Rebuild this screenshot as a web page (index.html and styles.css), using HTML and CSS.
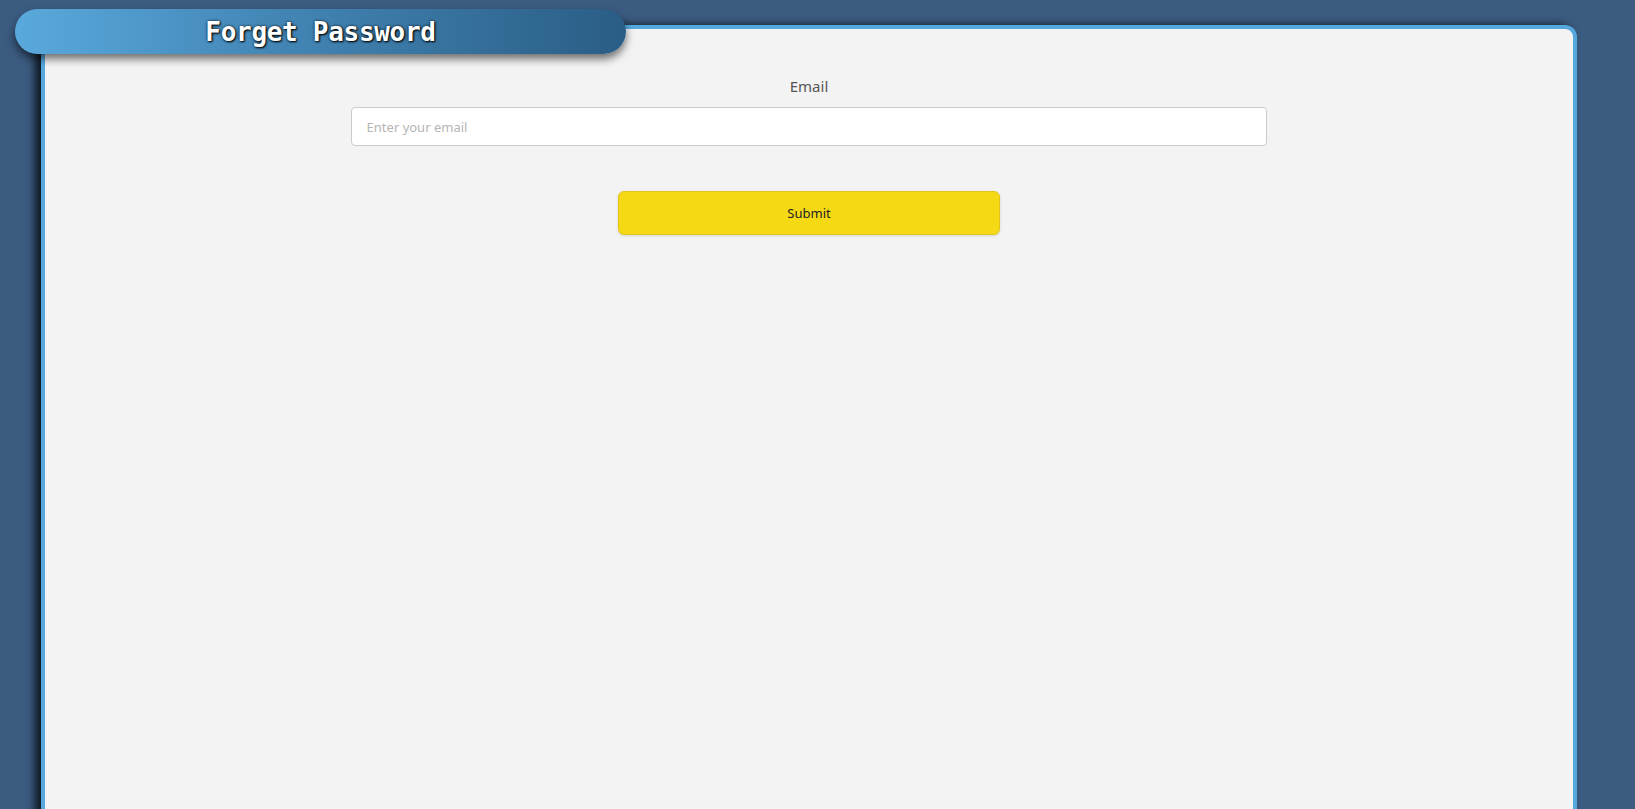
FILE: index.html
```html
<!DOCTYPE html>
<html lang="en">
<head>
<meta charset="utf-8">
<title>Forget Password</title>
<link rel="stylesheet" href="styles.css">
</head>
<body>
<div class="page">
  <div class="title-pill"><h1 class="title">Forget Password</h1></div>
  <main class="card">
    <form class="form">
      <label class="label" for="email">Email</label>
      <input class="input" id="email" type="email" placeholder="Enter your email">
      <button class="submit" type="button">Submit</button>
    </form>
  </main>
</div>
</body>
</html>
```

FILE: styles.css
```css
html, body {
  margin: 0;
  padding: 0;
  height: 100%;
  overflow: hidden;
}
body {
  background: #3b5b80;
  font-family: "Noto Sans", "Open Sans", "Liberation Sans", sans-serif;
}
.page {
  position: relative;
  padding: 25px 58px 0 41px;
}
.title-pill {
  position: absolute;
  left: 15px;
  top: 9px;
  width: 611px;
  height: 45px;
  border-radius: 23px;
  background: linear-gradient(90deg, #5aa9dc 0%, #4488b8 40%, #2a5d85 100%);
  box-shadow: 0 5px 9px rgba(0, 0, 0, 0.55);
  display: flex;
  align-items: center;
  justify-content: center;
  z-index: 2;
}
.title {
  margin: 0;
  font-family: "DejaVu Sans Mono", "Liberation Mono", monospace;
  font-weight: bold;
  font-size: 26px;
  letter-spacing: -0.3px;
  color: #ffffff;
  text-shadow: 1px 1px 2px #000, 0 0 3px rgba(0,0,0,0.8);
  line-height: 1;
}
.card {
  box-sizing: border-box;
  height: 830px;
  background: #f3f3f3;
  border: 4px solid #55a8de;
  border-radius: 12px;
  box-shadow: -6px 0 9px rgba(0, 0, 0, 0.75);
  padding-top: 47px;
}
.form {
  display: flex;
  flex-direction: column;
  align-items: center;
}
.label {
  font-size: 15px;
  line-height: 20px;
  color: #555555;
  margin-bottom: 11px;
}
.input {
  box-sizing: border-box;
  width: 60%;
  height: 39px;
  border: 1px solid #cccccc;
  border-radius: 4px;
  background: #ffffff;
  padding: 0 15px;
  font-family: inherit;
  font-size: 13px;
  color: #333;
  outline: none;
}
.input::placeholder {
  color: #b5b5b5;
}
.submit {
  box-sizing: border-box;
  margin-top: 45px;
  width: 25%;
  height: 44px;
  background: #f5d915;
  border: 1px solid #e2c51b;
  border-radius: 6px;
  box-shadow: 0 1px 3px rgba(0, 0, 0, 0.12);
  font-family: inherit;
  font-size: 13px;
  font-weight: normal;
  color: #222222;
  cursor: pointer;
}
```
